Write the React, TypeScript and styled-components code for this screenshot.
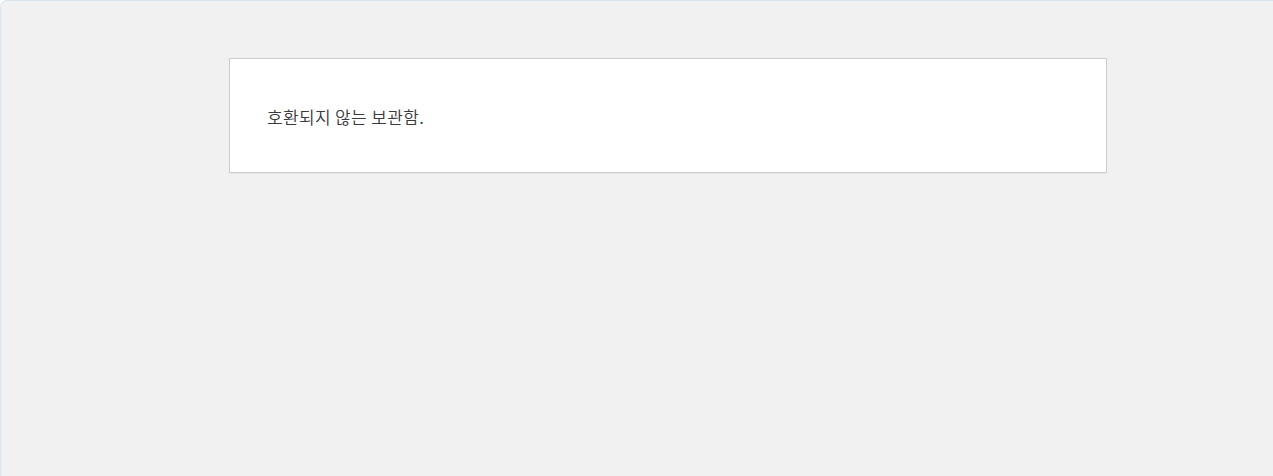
import { FC } from "react"
import styled, { createGlobalStyle } from "styled-components"

const GlobalStyle = createGlobalStyle`
  html,
  body {
    margin: 0;
    padding: 0;
    background: #ffffff;
  }

  body {
    font-family: "Noto Sans CJK KR", "Noto Sans", sans-serif;
  }
`

const Frame = styled.div`
  box-sizing: border-box;
  width: 1273px;
  height: 476px;
  background: #f1f1f1;
  border-top: 1px solid #dbe4ee;
  border-left: 1px solid #dbe4ee;
  border-top-left-radius: 7px;
  padding-top: 57px;
  padding-left: 228px;
`

const Card = styled.div`
  box-sizing: border-box;
  width: 878px;
  height: 115px;
  background: #ffffff;
  border: 1px solid #cccccc;
  box-shadow: 0 1px 1px rgba(0, 0, 0, 0.04);
  padding: 47px 37px 0;
`

const Message = styled.p`
  margin: 0;
  font-size: 17px;
  font-weight: 350;
  line-height: 22px;
  letter-spacing: 0.35px;
  color: #3a3a3a;
`

const App: FC = () => (
  <>
    <GlobalStyle />
    <Frame>
      <Card>
        <Message>호환되지 않는 보관함.</Message>
      </Card>
    </Frame>
  </>
)

export default App
